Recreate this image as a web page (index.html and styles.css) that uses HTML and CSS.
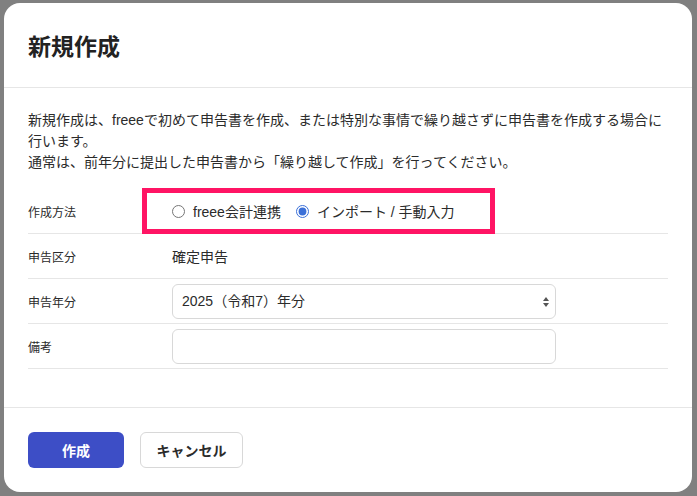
FILE: index.html
```html
<!DOCTYPE html>
<html lang="ja">
<head>
    <meta charset="UTF-8">
    <meta name="viewport" content="width=device-width, initial-scale=1.0">
    <title>新規作成</title>
    <link rel="stylesheet" href="styles.css">
</head>
<body>
    <div class="dialog">
        <div class="dialog-header">
            <h1>新規作成</h1>
        </div>

        <div class="dialog-body">
            <p class="lead">
                新規作成は、freeeで初めて申告書を作成、または特別な事情で繰り越さずに申告書を作成する場合に行います。<br>
                通常は、前年分に提出した申告書から「繰り越して作成」を行ってください。
            </p>

            <div class="form-row">
                <div class="form-label">作成方法</div>
                <div class="form-value radio-group">
                    <label class="radio"><input type="radio" name="method"> freee会計連携</label>
                    <label class="radio"><input type="radio" name="method" checked> インポート / 手動入力</label>
                    <span class="highlight"></span>
                </div>
            </div>

            <div class="form-row">
                <div class="form-label">申告区分</div>
                <div class="form-value">確定申告</div>
            </div>

            <div class="form-row">
                <div class="form-label">申告年分</div>
                <div class="form-value">
                    <div class="select-wrap">
                        <select class="field">
                            <option>2025（令和7）年分</option>
                        </select>
                        <svg class="select-arrows" width="8" height="12" viewBox="0 0 8 12">
                            <path d="M4 1 L7 5 L1 5 Z" fill="#555"/>
                            <path d="M4 11 L7 7 L1 7 Z" fill="#555"/>
                        </svg>
                    </div>
                </div>
            </div>

            <div class="form-row">
                <div class="form-label">備考</div>
                <div class="form-value">
                    <input type="text" class="field">
                </div>
            </div>
        </div>

        <div class="dialog-footer">
            <button class="btn btn-primary">作成</button>
            <button class="btn btn-secondary">キャンセル</button>
        </div>
    </div>
</body>
</html>
```

FILE: styles.css
```css
:root {
    --primary-color: #3d4ec6;
    --text-color: #2b2b2b;
    --line-color: #e6e6e6;
    --field-border: #d8d8d8;
    --mark-color: #ff1464;
}

* {
    margin: 0;
    padding: 0;
    box-sizing: border-box;
}

body {
    font-family: 'Liberation Sans', 'Noto Sans CJK JP', sans-serif;
    background-color: #808080;
    color: var(--text-color);
    padding: 3px 0 0 4px;
    height: 100vh;
    overflow: hidden;
}

.dialog {
    width: 688px;
    height: 489px;
    background: white;
    border-radius: 16px;
    display: flex;
    flex-direction: column;
    overflow: hidden;
}

.dialog-header {
    height: 85px;
    padding: 0 24px;
    display: flex;
    align-items: center;
    border-bottom: 1px solid var(--line-color);
}

.dialog-header h1 {
    font-size: 23px;
    font-weight: 700;
    color: #222;
}

.dialog-body {
    flex: 1;
    padding: 22px 24px 0;
}

.lead {
    font-size: 14px;
    line-height: 21px;
    margin-bottom: 16px;
}

.form-row {
    display: grid;
    grid-template-columns: 144px 1fr;
    align-items: center;
    height: 45px;
    border-bottom: 1px solid var(--line-color);
}

.form-label {
    font-size: 12px;
}

.form-value {
    font-size: 14px;
}

.radio-group {
    display: flex;
    align-items: center;
    gap: 15px;
    position: relative;
    height: 100%;
}

.radio {
    display: flex;
    align-items: center;
    gap: 8px;
}

.radio input {
    margin: 0;
    width: 13px;
    height: 13px;
    accent-color: #3a6fd8;
}

/* annotation box drawn over the row */
.highlight {
    position: absolute;
    left: -30px;
    top: -1px;
    width: 353px;
    height: 46px;
    border: 5px solid var(--mark-color);
    pointer-events: none;
}

.select-wrap {
    position: relative;
    width: 384px;
}

.field {
    display: block;
    width: 384px;
    height: 35px;
    border: 1px solid var(--field-border);
    border-radius: 6px;
    background: white;
    font-family: inherit;
    font-size: 14px;
    color: var(--text-color);
    padding: 0 9px;
    outline: none;
}

select.field {
    appearance: none;
    -webkit-appearance: none;
}

.select-arrows {
    position: absolute;
    right: 6px;
    top: 12px;
    pointer-events: none;
}

.dialog-footer {
    height: 85px;
    padding: 0 24px;
    display: flex;
    align-items: center;
    gap: 16px;
    border-top: 1px solid var(--line-color);
}

.btn {
    height: 36px;
    border-radius: 6px;
    font-family: inherit;
    font-size: 14px;
    font-weight: 700;
    cursor: pointer;
}

.btn-primary {
    width: 96px;
    background: var(--primary-color);
    color: white;
    border: none;
}

.btn-secondary {
    width: 103px;
    background: white;
    color: var(--text-color);
    border: 1px solid var(--field-border);
}
```
